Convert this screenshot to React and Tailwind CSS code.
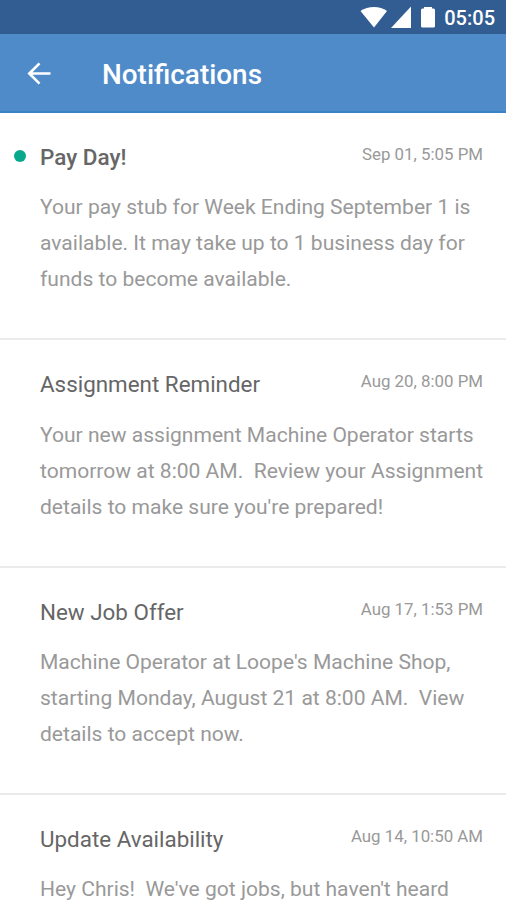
const notifications = [
  {
    title: 'Pay Day!',
    date: 'Sep 01, 5:05 PM',
    unread: true,
    lines: [
      'Your pay stub for Week Ending September 1 is',
      'available. It may take up to 1 business day for',
      'funds to become available.',
    ],
  },
  {
    title: 'Assignment Reminder',
    date: 'Aug 20, 8:00 PM',
    lines: [
      'Your new assignment Machine Operator starts',
      'tomorrow at 8:00 AM.  Review your Assignment',
      "details to make sure you're prepared!",
    ],
  },
  {
    title: 'New Job Offer',
    date: 'Aug 17, 1:53 PM',
    lines: [
      "Machine Operator at Loope's Machine Shop,",
      'starting Monday, August 21 at 8:00 AM.  View',
      'details to accept now.',
    ],
  },
  {
    title: 'Update Availability',
    date: 'Aug 14, 10:50 AM',
    lines: ["Hey Chris!  We've got jobs, but haven't heard"],
  },
];

function StatusBar() {
  return (
    <div className="flex h-[34px] shrink-0 items-center justify-end bg-[#325d92] pr-[11px] text-white">
      <svg width="28" height="22" viewBox="0 0 28 22" fill="currentColor">
        <path d="M14 21.500 0.500 5C4.300 2.300 9 1 14 1s9.200 1.300 13 4z" />
      </svg>
      <svg className="ml-[3px]" width="20" height="22" viewBox="0 0 20 22" fill="currentColor">
        <path d="M0 22 20 0.500V22z" />
      </svg>
      <svg className="ml-2.5" width="14" height="22" viewBox="0 0 14 22" fill="currentColor">
        <path d="M3 1h8v1.500h1.500q1.500 0 1.500 1.500v16q0 1.500-1.500 1.500h-11Q0 21.500 0 20V4Q0 2.500 1.500 2.500H3z" />
      </svg>
      <span className="mt-0.5 ml-[9px] text-[20px] leading-none font-medium">05:05</span>
    </div>
  );
}

function Header() {
  return (
    <header className="flex h-[79px] shrink-0 items-center border-b-2 border-[#3a82c6] bg-[#4f8bc9] pl-[27px] text-white">
      <svg width="24" height="24" viewBox="0 0 24 24" fill="none" stroke="currentColor" strokeWidth="2.6">
        <path d="M23.500 12.500H2.500M12.500 2.300 2.300 12.500l10.200 10.200" />
      </svg>
      <h1 className="mt-[5px] ml-[51px] text-[27.900px] leading-none font-medium">Notifications</h1>
    </header>
  );
}

function Notification({ title, date, unread, lines }) {
  return (
    <article className="relative h-[227.330px] shrink-0 border-b-2 border-[#ebebeb] pt-[28.900px] pr-[23px] pl-10">
      {unread && <span className="absolute top-[37px] left-[14px] size-[11.500px] rounded-full bg-[#08a88c]" />}
      <div className="flex h-[30px] justify-between">
        <h2 className={unread ? 'text-[22.500px] leading-[30px] font-medium text-[#666]' : 'text-[22.400px] leading-[30px] text-[#666]'}>
          {title}
        </h2>
        <time className="text-[16.850px] leading-[25px] text-[#999]">{date}</time>
      </div>
      <div className="mt-[17.300px] text-[21.050px] leading-9 whitespace-pre text-[#999]">
        {lines.map((line) => (
          <p key={line}>{line}</p>
        ))}
      </div>
    </article>
  );
}

export default function App() {
  return (
    <div className="flex h-[900px] w-[506px] flex-col overflow-hidden bg-white font-['Roboto',sans-serif]">
      <StatusBar />
      <Header />
      <main className="flex min-h-0 flex-1 flex-col overflow-hidden">
        {notifications.map((item) => (
          <Notification key={item.title} {...item} />
        ))}
      </main>
    </div>
  );
}
